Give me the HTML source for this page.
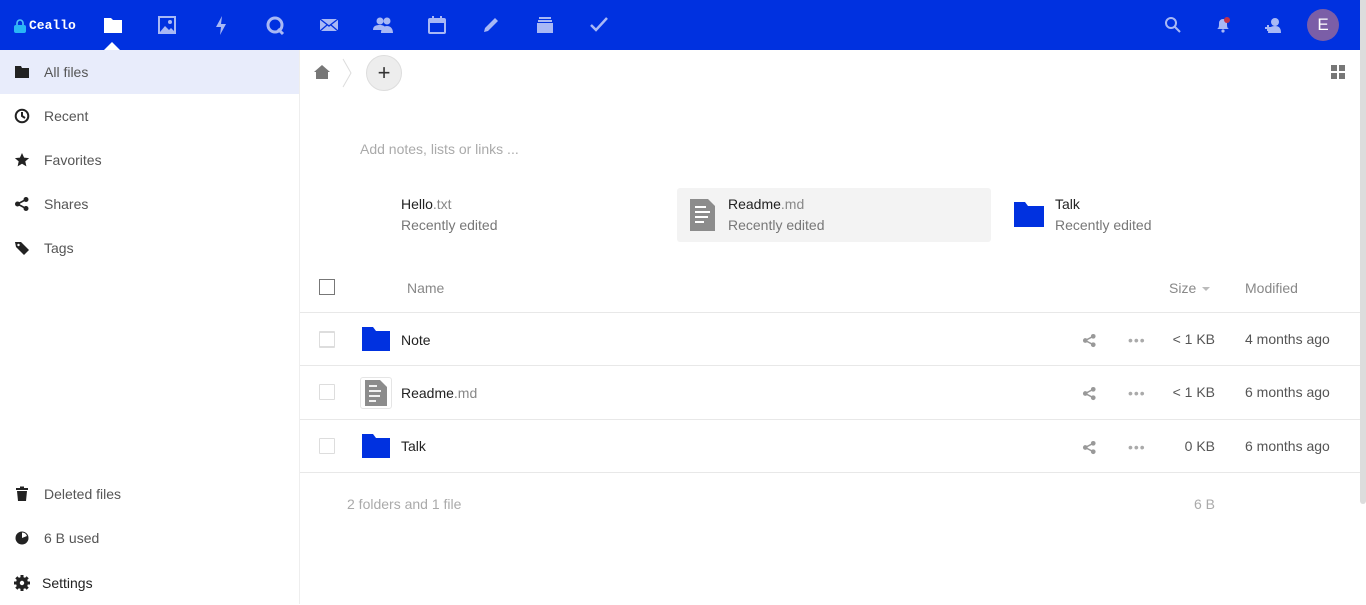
<!DOCTYPE html>
<html><head><meta charset="utf-8"><style>
*{margin:0;padding:0;box-sizing:border-box}
body{width:1366px;height:604px;overflow:hidden;background:#fff;font-family:"Liberation Sans",sans-serif;font-size:14px;color:#555;position:relative}
.a{position:absolute}
#top{left:0;top:0;width:1360px;height:50px;background:#0031e0}
#sb{left:1360px;top:0;width:6px;height:504px;background:#dcdcdc;border-radius:0 0 3px 3px}
.ni{position:absolute;top:14px;width:22px;height:22px}
.side{left:0;top:50px;width:300px;height:554px;border-right:1px solid #eee}
.it{position:absolute;left:0;width:299px;height:44px}
.it span{position:absolute;left:44px;top:14px;color:#555}
.it svg{position:absolute;left:14px;top:14px}
.row{position:absolute;left:300px;width:1060px;height:53px;border-top:1px solid #e8e8e8}
.cb{position:absolute;left:19px;width:16px;height:16px;border:1px solid #ddd;border-radius:1px}
.nm{position:absolute;left:101px;color:#222}
.grey{color:#888}
</style></head><body>
<div id="top" class="a">
 <svg class="a" style="left:13px;top:19px" width="14" height="14" viewBox="0 0 14 14"><path d="M4 6V4a3 3 0 0 1 6 0v2" stroke="#4fc3f7" stroke-width="1.6" fill="none"/><rect x="1" y="6" width="12" height="8" rx="2" fill="#29b6f6"/></svg>
 <div class="a" style="left:29px;top:18px;color:#fff;font-family:'Liberation Mono',monospace;font-size:13px;font-weight:bold">Ceallo</div>
 <svg class="ni" style="left:102px" viewBox="0 0 22 22"><path d="M2 4h7l2 2h9v13H2z" fill="#fff"/></svg>
 <div class="a" style="left:104px;top:42px;width:0;height:0;border-left:8px solid transparent;border-right:8px solid transparent;border-bottom:8px solid #fff"></div>
 <svg class="ni" style="left:156px" viewBox="0 0 22 22"><rect x="3" y="3" width="16" height="16" fill="none" stroke="#a8b8f5" stroke-width="2"/><path d="M4 18l5-6 4 4 2-2 4 4z" fill="#a8b8f5"/><circle cx="14" cy="8" r="2" fill="#a8b8f5"/></svg>
 <svg class="ni" style="left:210px" viewBox="0 0 22 22"><path d="M12 2L6 13h5l-1 8 6-11h-5z" fill="#a8b8f5"/></svg>
 <svg class="ni" style="left:264px" viewBox="0 0 22 22"><circle cx="11" cy="11" r="7" fill="none" stroke="#a8b8f5" stroke-width="3"/><path d="M14 15l5 5" stroke="#a8b8f5" stroke-width="3"/></svg>
 <svg class="ni" style="left:318px" viewBox="0 0 22 22"><rect x="2" y="5" width="18" height="12" fill="#a8b8f5"/><path d="M2 5l9 7 9-7M2 17l7-6M20 17l-7-6" stroke="#0031e0" stroke-width="1.3" fill="none"/></svg>
 <svg class="ni" style="left:372px" viewBox="0 0 22 22"><circle cx="8" cy="7" r="3.5" fill="#a8b8f5"/><circle cx="15" cy="7" r="3.5" fill="#a8b8f5"/><path d="M1 16c0-4 3-5 7-5s6 2 6 5zM9 19c0-5 3-7 6-7s6 2 6 7z" fill="#a8b8f5"/></svg>
 <svg class="ni" style="left:426px" viewBox="0 0 22 22"><rect x="3" y="5" width="16" height="14" rx="1" fill="none" stroke="#a8b8f5" stroke-width="2"/><rect x="3" y="5" width="16" height="4" fill="#a8b8f5"/><path d="M7 2v5M15 2v5" stroke="#a8b8f5" stroke-width="2"/></svg>
 <svg class="ni" style="left:480px" viewBox="0 0 22 22"><path d="M4 18l1-4 10-10 3 3-10 10z" fill="#a8b8f5"/></svg>
 <svg class="ni" style="left:534px" viewBox="0 0 22 22"><rect x="5" y="3" width="12" height="2" fill="#a8b8f5"/><rect x="4" y="6" width="14" height="2" fill="#a8b8f5"/><rect x="3" y="9" width="16" height="10" fill="#a8b8f5"/></svg>
 <svg class="ni" style="left:588px" viewBox="0 0 22 22"><path d="M3 11l5 5L19 4" stroke="#a8b8f5" stroke-width="2.5" fill="none"/></svg>
 <svg class="ni" style="left:1162px" viewBox="0 0 22 22"><circle cx="9" cy="9" r="5" fill="none" stroke="#a8b8f5" stroke-width="2"/><path d="M13 13l5 5" stroke="#a8b8f5" stroke-width="2"/></svg>
 <svg class="ni" style="left:1212px" viewBox="0 0 22 22"><path d="M5 15c2-1 2-3 2-6a4 4 0 0 1 8 0c0 3 0 5 2 6z" fill="#a8b8f5"/><circle cx="11" cy="17" r="1.6" fill="#a8b8f5"/><circle cx="15" cy="6" r="3" fill="#c0304a"/></svg>
 <svg class="ni" style="left:1262px" viewBox="0 0 22 22"><circle cx="13" cy="8" r="4" fill="#a8b8f5"/><path d="M6 19c0-5 3-7 7-7s6 2 6 7z" fill="#a8b8f5"/><path d="M3 14h6M6 11v6" stroke="#a8b8f5" stroke-width="2"/></svg>
 <div class="a" style="left:1307px;top:9px;width:32px;height:32px;border-radius:50%;background:#7b5ea7;color:#fff;font-size:17px;text-align:center;line-height:32px">E</div>
</div>
<div id="sb" class="a"></div>
<div class="a side">
 <div class="it" style="top:0;background:#e8ecfb"><svg width="16" height="16" viewBox="0 0 16 16"><path d="M1 2h6l1 2h7v10H1z" fill="#222"/></svg><span>All files</span></div>
 <div class="it" style="top:44px"><svg width="16" height="16" viewBox="0 0 16 16"><circle cx="8" cy="8" r="6.3" fill="none" stroke="#222" stroke-width="2"/><path d="M8 4v4l3 2" stroke="#222" stroke-width="2" fill="none"/></svg><span>Recent</span></div>
 <div class="it" style="top:88px"><svg width="16" height="16" viewBox="0 0 16 16"><path d="M8 1l2.1 4.6 5 .5-3.8 3.3 1.1 5L8 11.8 3.6 14.4l1.1-5L.9 6.1l5-.5z" fill="#222"/></svg><span>Favorites</span></div>
 <div class="it" style="top:132px"><svg width="16" height="16" viewBox="0 0 16 16"><circle cx="12" cy="3.5" r="2.5" fill="#222"/><circle cx="3.5" cy="8" r="2.5" fill="#222"/><circle cx="12" cy="12.5" r="2.5" fill="#222"/><path d="M12 3.5L3.5 8l8.5 4.5" stroke="#222" stroke-width="1.6" fill="none"/></svg><span>Shares</span></div>
 <div class="it" style="top:176px"><svg width="16" height="16" viewBox="0 0 16 16"><path d="M1 2h6l8 8-5 5-8-8z" fill="#222"/><circle cx="4.5" cy="5" r="1.2" fill="#fff"/></svg><span>Tags</span></div>
 <div class="it" style="top:422px"><svg width="16" height="16" viewBox="0 0 16 16"><rect x="2" y="2" width="12" height="2" fill="#222"/><rect x="6" y="0.5" width="4" height="2" fill="#222"/><path d="M3 5h10l-1 10H4z" fill="#222"/></svg><span>Deleted files</span></div>
 <div class="it" style="top:466px"><svg width="16" height="16" viewBox="0 0 16 16"><circle cx="8" cy="8" r="6.5" fill="#222"/><path d="M8 8V2.5A5.5 5.5 0 0 1 13 6z" fill="#fff"/></svg><span>6 B used</span></div>
 <div class="it" style="top:511px"><svg width="16" height="16" viewBox="0 0 16 16" style="left:14px;top:14px"><circle cx="8" cy="8" r="4.5" fill="none" stroke="#222" stroke-width="3"/><path d="M8 0v16M0 8h16M2.3 2.3l11.4 11.4M13.7 2.3L2.3 13.7" stroke="#222" stroke-width="3"/><circle cx="8" cy="8" r="2.2" fill="#fff"/></svg><span style="left:42px;top:14px;color:#222">Settings</span></div>
</div>
<svg class="a" style="left:314px;top:65px" width="16" height="14" viewBox="0 0 16 14"><path d="M8 0l8 7h-2v7H2V7H0z" fill="#777"/></svg>
<svg class="a" style="left:342px;top:58px" width="10" height="30" viewBox="0 0 10 30"><path d="M1 1l8 14-8 14" stroke="#ddd" fill="none"/></svg>
<div class="a" style="left:366px;top:55px;width:36px;height:36px;border-radius:50%;background:#ededed;border:1px solid #ddd;text-align:center;line-height:33px;font-size:22px;color:#333">+</div>
<svg class="a" style="left:1331px;top:65px" width="14" height="14" viewBox="0 0 14 14"><rect x="0" y="0" width="6" height="6" fill="#777"/><rect x="8" y="0" width="6" height="6" fill="#777"/><rect x="0" y="8" width="6" height="6" fill="#777"/><rect x="8" y="8" width="6" height="6" fill="#777"/></svg>
<div class="a" style="left:360px;top:141px;color:#aaa">Add notes, lists or links ...</div>
<div class="a" style="left:401px;top:196px;color:#222">Hello<span class="grey">.txt</span></div>
<div class="a" style="left:401px;top:217px;color:#777">Recently edited</div>
<div class="a" style="left:677px;top:188px;width:314px;height:54px;background:#f3f3f3;border-radius:3px"></div>
<svg class="a" style="left:690px;top:199px" width="26" height="32" viewBox="0 0 26 32"><path d="M0 0h18l7 7v25H0z" fill="#8c8c8c"/><path d="M5 8h11M5 13h15M5 18h13M5 23h9" stroke="#fff" stroke-width="2"/></svg>
<div class="a" style="left:728px;top:196px;color:#222">Readme<span class="grey">.md</span></div>
<div class="a" style="left:728px;top:217px;color:#777">Recently edited</div>
<svg class="a" style="left:1014px;top:202px" width="30" height="25" viewBox="0 0 30 25"><path d="M0 0h11l3 4h16v21H0z" fill="#0031e0"/></svg>
<div class="a" style="left:1055px;top:196px;color:#222">Talk</div>
<div class="a" style="left:1055px;top:217px;color:#777">Recently edited</div>
<div class="a" style="left:319px;top:279px;width:16px;height:16px;border:1px solid #777"></div>
<div class="a" style="left:407px;top:280px;color:#888">Name</div>
<div class="a" style="left:1169px;top:280px;color:#888">Size</div>
<div class="a" style="left:1202px;top:287px;border-left:4px solid transparent;border-right:4px solid transparent;border-top:4px solid #bbb"></div>
<div class="a" style="left:1245px;top:280px;color:#888">Modified</div>
<div class="row" style="top:312px">
 <div class="cb" style="top:19px"></div>
 <svg class="a" style="left:62px;top:14px" width="28" height="24" viewBox="0 0 28 24"><path d="M0 0h11l3 4h14v20H0z" fill="#0031e0"/></svg>
 <div class="nm" style="top:19px">Note</div>
</div>
<div class="row" style="top:365px">
 <div class="a" style="left:60px;top:11px;width:32px;height:32px;border:1px solid #e5e5e5;border-radius:3px;background:#fff"></div>
 <svg class="a" style="left:65px;top:14px" width="22" height="26" viewBox="0 0 22 26"><path d="M0 0h15l7 7v19H0z" fill="#8c8c8c"/><path d="M4 6h8M4 11h12M4 16h11M4 21h7" stroke="#fff" stroke-width="1.8"/></svg>
 <div class="nm" style="top:19px">Readme<span class="grey">.md</span></div>
</div>
<div class="row" style="top:419px">
 <svg class="a" style="left:62px;top:14px" width="28" height="24" viewBox="0 0 28 24"><path d="M0 0h11l3 4h14v20H0z" fill="#0031e0"/></svg>
 <div class="nm" style="top:18px">Talk</div>
</div>
<div class="row" style="top:472px;height:1px"></div>
<div class="a cb" style="left:319px;top:331px"></div>
<div class="a cb" style="left:319px;top:384px"></div>
<div class="a cb" style="left:319px;top:438px"></div>
<svg class="a" style="left:1082px;top:333px" width="15" height="15" viewBox="0 0 16 16"><circle cx="12" cy="3.5" r="2.5" fill="#999"/><circle cx="3.5" cy="8" r="2.5" fill="#999"/><circle cx="12" cy="12.5" r="2.5" fill="#999"/><path d="M12 3.5L3.5 8l8.5 4.5" stroke="#999" stroke-width="1.6" fill="none"/></svg>
<svg class="a" style="left:1082px;top:386px" width="15" height="15" viewBox="0 0 16 16"><circle cx="12" cy="3.5" r="2.5" fill="#999"/><circle cx="3.5" cy="8" r="2.5" fill="#999"/><circle cx="12" cy="12.5" r="2.5" fill="#999"/><path d="M12 3.5L3.5 8l8.5 4.5" stroke="#999" stroke-width="1.6" fill="none"/></svg>
<svg class="a" style="left:1082px;top:440px" width="15" height="15" viewBox="0 0 16 16"><circle cx="12" cy="3.5" r="2.5" fill="#999"/><circle cx="3.5" cy="8" r="2.5" fill="#999"/><circle cx="12" cy="12.5" r="2.5" fill="#999"/><path d="M12 3.5L3.5 8l8.5 4.5" stroke="#999" stroke-width="1.6" fill="none"/></svg>
<div class="a" style="left:1128px;top:332px;color:#aaa;letter-spacing:1px">•••</div>
<div class="a" style="left:1128px;top:385px;color:#aaa;letter-spacing:1px">•••</div>
<div class="a" style="left:1128px;top:439px;color:#aaa;letter-spacing:1px">•••</div>
<div class="a" style="left:1155px;width:60px;text-align:right;top:331px">&lt; 1 KB</div>
<div class="a" style="left:1155px;width:60px;text-align:right;top:384px">&lt; 1 KB</div>
<div class="a" style="left:1155px;width:60px;text-align:right;top:438px">0 KB</div>
<div class="a" style="left:1245px;top:331px">4 months ago</div>
<div class="a" style="left:1245px;top:384px">6 months ago</div>
<div class="a" style="left:1245px;top:438px">6 months ago</div>
<div class="a" style="left:347px;top:496px;color:#aaa">2 folders and 1 file</div>
<div class="a" style="left:1155px;width:60px;text-align:right;top:496px;color:#aaa">6 B</div>
</body></html>
